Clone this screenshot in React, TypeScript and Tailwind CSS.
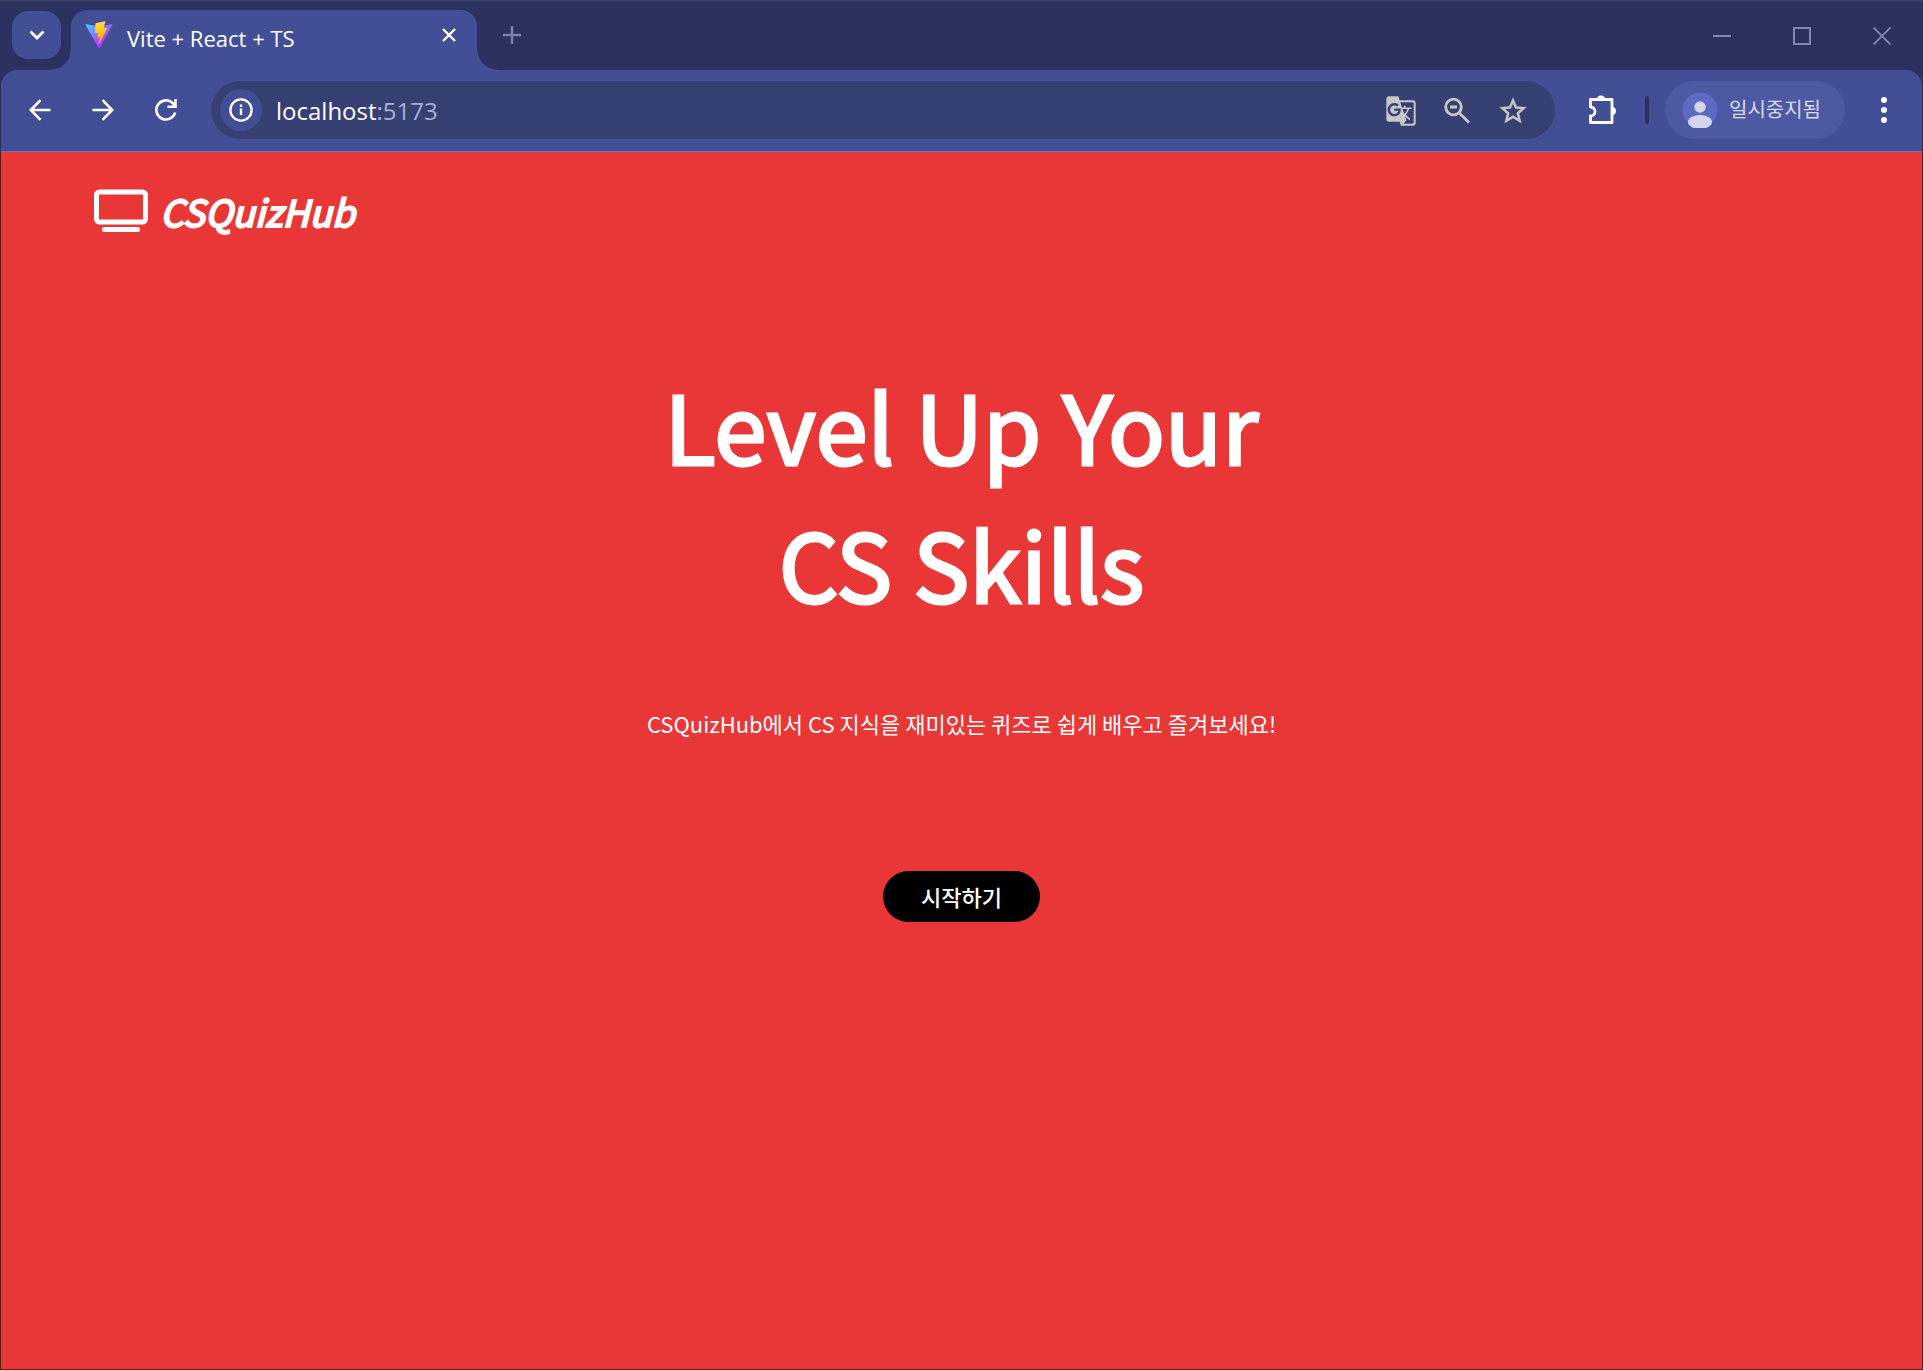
import React from "react";
import { MdGTranslate, MdStarOutline } from "react-icons/md";

const stroke = {
  fill: "none",
  stroke: "currentColor",
} as const;

function ViteLogo() {
  return (
    <svg viewBox="0 0 410 404" className="h-7 w-7 shrink-0" aria-hidden="true">
      <defs>
        <linearGradient id="vite-a" x1="6" y1="33" x2="235" y2="344" gradientUnits="userSpaceOnUse">
          <stop stopColor="#41D1FF" />
          <stop offset="1" stopColor="#BD34FE" />
        </linearGradient>
        <linearGradient id="vite-b" x1="194.65" y1="8.82" x2="236.08" y2="292.99" gradientUnits="userSpaceOnUse">
          <stop stopColor="#FFEA83" />
          <stop offset="0.083" stopColor="#FFDD35" />
          <stop offset="1" stopColor="#FFA800" />
        </linearGradient>
      </defs>
      <path
        fill="url(#vite-a)"
        d="M399.641 59.5246L215.643 388.545C211.844 395.338 202.084 395.378 198.228 388.618L10.5817 59.5563C6.38087 52.1896 12.6802 43.2665 21.0281 44.7586L205.223 77.6824C206.398 77.8924 207.601 77.8904 208.776 77.6763L389.119 44.8058C397.439 43.2894 403.768 52.1434 399.641 59.5246Z"
      />
      <path
        fill="url(#vite-b)"
        d="M292.965 1.5744L156.801 28.2552C154.563 28.6937 152.906 30.5903 152.771 32.8664L144.395 174.33C144.198 177.662 147.258 180.248 150.51 179.498L188.42 170.749C191.967 169.931 195.172 173.055 194.443 176.622L183.18 231.775C182.422 235.487 185.907 238.661 189.532 237.56L212.947 230.446C216.577 229.344 220.065 232.527 219.297 236.242L201.398 322.875C200.278 328.294 207.486 331.249 210.492 326.603L212.5 323.5L323.454 102.072C325.312 98.3645 322.108 94.137 318.036 94.9228L279.014 102.454C275.347 103.161 272.227 99.746 273.262 96.1583L298.731 7.86689C299.767 4.27314 296.636 0.855181 292.965 1.5744Z"
      />
    </svg>
  );
}

function TabStrip() {
  return (
    <header className="flex h-[70px] items-end border-t border-[#3a4260] bg-[#2b325f] pl-3">
      <button
        type="button"
        aria-label="탭 검색"
        className="mb-[11px] flex h-12 w-[49px] items-center justify-center rounded-2xl bg-[#424f97] text-white"
      >
        <svg viewBox="0 0 16 12" className="h-3 w-4" {...stroke} strokeWidth="2.8">
          <path d="M1.5 2.5 8 9l6.5-6.5" />
        </svg>
      </button>
      <div className="relative ml-[10px] flex h-[60px] w-[406px] items-start rounded-t-2xl bg-[#424f97] pl-[14px] text-white">
        <span className="absolute bottom-0 right-full size-5 bg-[radial-gradient(circle_at_0_0,transparent_19px,#424f97_20px)]" />
        <span className="absolute bottom-0 left-full size-5 bg-[radial-gradient(circle_at_100%_0,transparent_19px,#424f97_20px)]" />
        <div className="mt-[11px] flex w-full items-start">
          <ViteLogo />
          <h2 className="ml-[14px] flex-1 whitespace-nowrap text-[22px] leading-[34px]">Vite + React + TS</h2>
          <button type="button" aria-label="탭 닫기" className="mr-[18px] mt-1 flex size-5 items-center justify-center">
            <svg viewBox="0 0 14 14" className="size-[14px]" {...stroke} strokeWidth="2.4">
              <path d="M1 1l12 12M13 1 1 13" />
            </svg>
          </button>
        </div>
      </div>
      <button
        type="button"
        aria-label="새 탭"
        className="mb-[17px] ml-[17px] flex size-9 items-center justify-center text-[#7b80a8]"
      >
        <svg viewBox="0 0 18 18" className="size-[18px]" {...stroke} strokeWidth="2.4">
          <path d="M9 0v18M0 9h18" />
        </svg>
      </button>
      <div className="mb-[14px] ml-auto mr-px flex h-10 text-[#8589ad]">
        <button type="button" aria-label="최소화" className="flex w-20 items-center justify-center">
          <svg viewBox="0 0 18 18" className="size-[18px]" {...stroke} strokeWidth="2">
            <path d="M0 9h18" />
          </svg>
        </button>
        <button type="button" aria-label="최대화" className="flex w-20 items-center justify-center">
          <svg viewBox="0 0 18 18" className="size-[18px]" {...stroke} strokeWidth="2">
            <path d="M1 1h16v16H1z" />
          </svg>
        </button>
        <button type="button" aria-label="닫기" className="flex w-20 items-center justify-center">
          <svg viewBox="0 0 18 18" className="size-[18px]" {...stroke} strokeWidth="1.8">
            <path d="M.5.5l17 17M17.5.5l-17 17" />
          </svg>
        </button>
      </div>
    </header>
  );
}

function Toolbar() {
  return (
    <div className="bg-[#2b325f] px-px">
      <nav className="flex h-[82px] items-center rounded-t-2xl border-b border-[#6d77ae] bg-[#424f97] pb-px pl-[7px] text-white">
        <button type="button" aria-label="뒤로" className="flex h-12 w-[63px] items-center justify-center">
          <svg viewBox="0 0 22 22" className="size-[22px]" {...stroke} strokeWidth="2.6">
            <path d="M21.5 11H2M11.5 1.2 1.8 11l9.7 9.8" />
          </svg>
        </button>
        <button type="button" aria-label="앞으로" className="flex h-12 w-[63px] items-center justify-center">
          <svg viewBox="0 0 22 22" className="size-[22px]" {...stroke} strokeWidth="2.6">
            <path d="M.5 11H20M10.5 1.2l9.7 9.8-9.7 9.8" />
          </svg>
        </button>
        <button type="button" aria-label="새로고침" className="flex h-12 w-[63px] items-center justify-center">
          <svg viewBox="0 0 22 22" className="size-[22px]" {...stroke} strokeWidth="2.6">
            <path d="M20.2 13.5A9.6 9.6 0 1 1 18 4.4l2.2 2.6" />
            <path d="M20.5 0v7.7h-8" />
          </svg>
        </button>
        <div className="ml-[14px] flex h-[58px] flex-1 items-center rounded-full bg-[#374073] pl-[9px] pr-[26px]">
          <button
            type="button"
            aria-label="사이트 정보 보기"
            className="flex size-[42px] items-center justify-center rounded-full bg-[#424f97]"
          >
            <svg viewBox="0 0 24 24" className="size-6" {...stroke} strokeWidth="2.4">
              <circle cx="12" cy="12" r="10.6" />
              <path d="M12 10.5V17M12 6.5V9" />
            </svg>
          </button>
          <a href="#top" className="ml-[14px] flex-1 pt-[2px] text-[24px] leading-8">
            localhost<span className="text-[#a9b0d6]">:5173</span>
          </a>
          <div className="flex items-center gap-6 pt-[2px] text-[#c7c7c7]">
            <button type="button" aria-label="페이지 번역">
              <MdGTranslate className="size-8" />
            </button>
            <button type="button" aria-label="축소">
              <svg viewBox="0 0 32 32" className="size-8" {...stroke} strokeWidth="2.8">
                <circle cx="12.500" cy="12" r="7.800" />
                <path d="M17.800 17.400 28 27.600M9 12h7" />
              </svg>
            </button>
            <button type="button" aria-label="북마크에 추가">
              <MdStarOutline className="size-8" stroke="currentColor" strokeWidth="0.3" />
            </button>
          </div>
        </div>
        <button type="button" aria-label="확장 프로그램" className="ml-[30px] flex size-8 items-center justify-center">
          <svg viewBox="0 0 32 32" className="size-8" {...stroke} strokeWidth="2.8" strokeLinejoin="round">
            <path d="M5.500 5.500h21.500v23H5.500v-6.500a4.500 4.500 0 0 0 0-9z" />
            <path fill="currentColor" stroke="none" d="M12 5.500a4 4 0 0 1 8 0zM27 13a4 4 0 0 1 0 8z" />
          </svg>
        </button>
        <span className="ml-7 h-7 w-1 rounded-full bg-[#2b325f]" />
        <button
          type="button"
          className="ml-4 flex h-[58px] w-[180px] items-center rounded-full bg-[#4d5aa3] pl-[17px] text-[20px] text-[#d8dcf5]"
        >
          <svg viewBox="0 0 36 36" className="size-9" aria-hidden="true">
            <circle cx="18" cy="18" r="17.500" fill="#5c6ac4" />
            <circle cx="18" cy="15" r="5.800" fill="#d3d5ef" />
            <ellipse cx="18" cy="30" rx="12" ry="7" fill="#d3d5ef" />
          </svg>
          <span className="ml-[11px] whitespace-nowrap">일시중지됨</span>
        </button>
        <button type="button" aria-label="Chrome 메뉴" className="ml-[19px] mr-[18px] flex size-10 items-center justify-center">
          <svg viewBox="0 0 6 28" className="h-7 w-[6px]" fill="currentColor">
            <circle cx="3" cy="4" r="3" />
            <circle cx="3" cy="14" r="3" />
            <circle cx="3" cy="24" r="3" />
          </svg>
        </button>
      </nav>
    </div>
  );
}

function Landing() {
  return (
    <div
      id="top"
      className="flex flex-1 flex-col border-x border-b border-[#5a1d14] bg-[#e93737] font-['Noto_Sans_CJK_KR',sans-serif] text-white"
    >
      <a href="#top" className="ml-[93px] mt-[30px] flex items-center self-start">
        <svg viewBox="0 0 54 44" className="h-11 w-[54px]" aria-hidden="true">
          <rect x="2.500" y="3" width="49" height="30" rx="3" fill="none" stroke="currentColor" strokeWidth="5" />
          <rect x="8" y="38" width="38" height="5" rx="2.500" fill="currentColor" />
        </svg>
        <span className="ml-3 text-[37px] italic leading-[58px] [-webkit-text-stroke:2px_currentColor]">
          CSQuizHub
        </span>
      </a>
      <main className="flex flex-col items-center pt-[115px] text-center">
        <h1 className="text-[94px] leading-[138px] [-webkit-text-stroke:3px_currentColor]">
          Level Up Your
          <br />
          CS Skills
        </h1>
        <p className="mt-[76px] text-[22px] leading-8">CSQuizHub에서 CS 지식을 재미있는 퀴즈로 쉽게 배우고 즐겨보세요!</p>
        <button type="button" className="mt-[132px] h-[51px] rounded-full bg-black px-[38px] text-[22px] font-medium">
          시작하기
        </button>
      </main>
    </div>
  );
}

export default function App() {
  return (
    <div className="flex min-h-screen flex-col bg-[#2b325f] font-['Open_Sans','Noto_Sans_CJK_KR',sans-serif]">
      <TabStrip />
      <Toolbar />
      <Landing />
    </div>
  );
}
